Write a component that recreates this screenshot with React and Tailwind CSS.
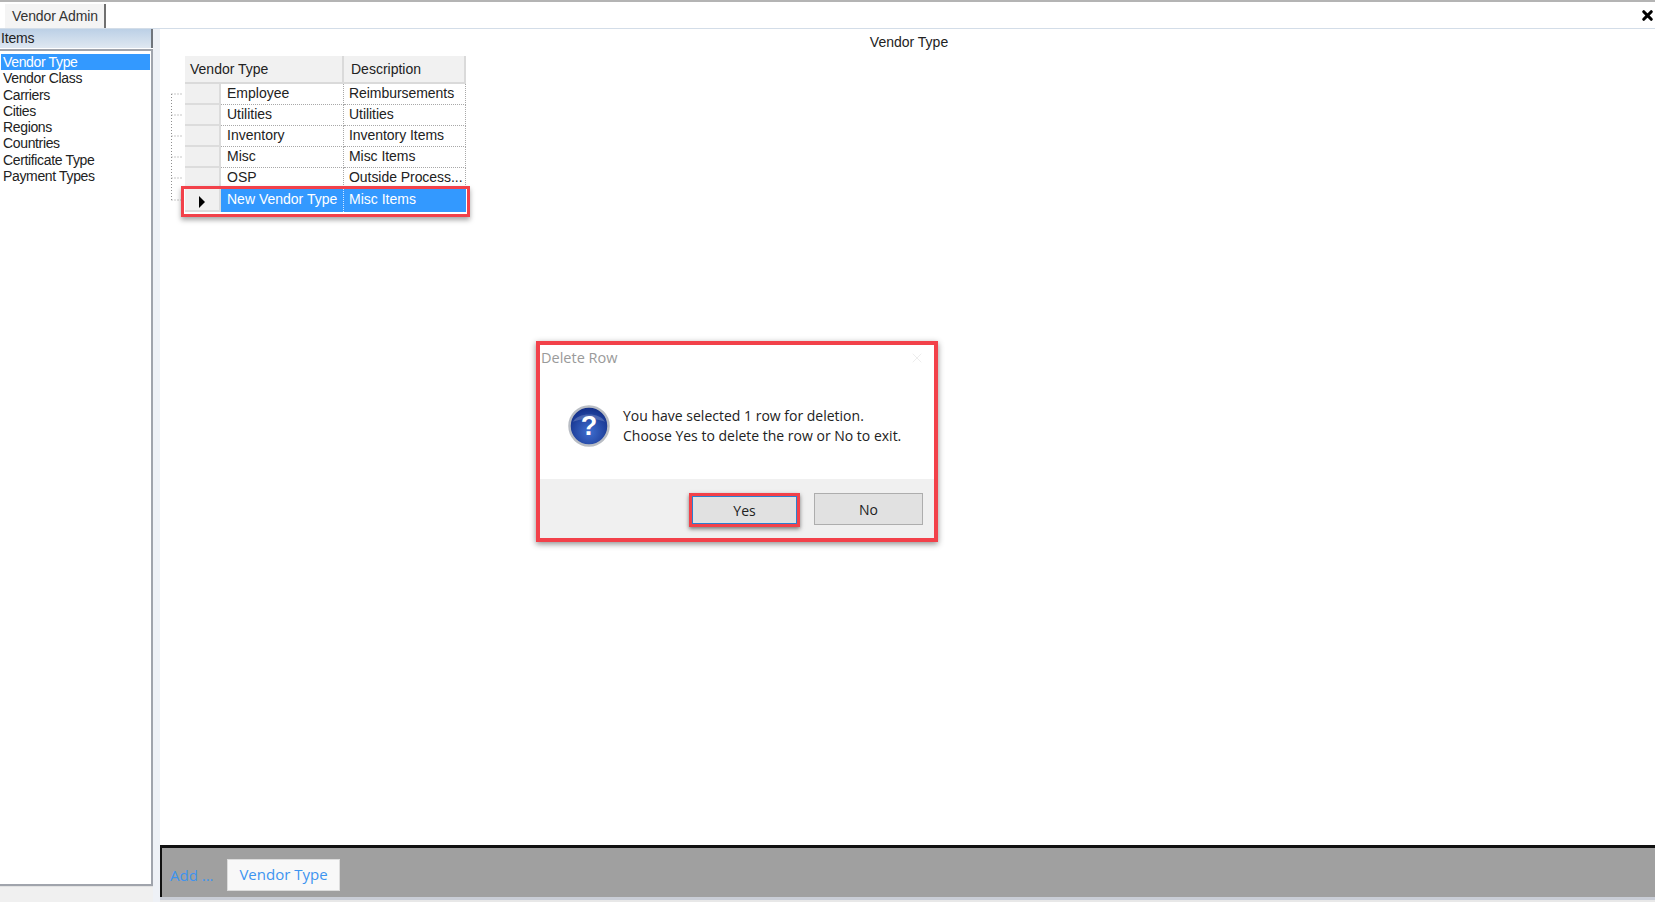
import { X } from "lucide-react";

const items = [
  "Vendor Type",
  "Vendor Class",
  "Carriers",
  "Cities",
  "Regions",
  "Countries",
  "Certificate Type",
  "Payment Types",
];

const rows = [
  { type: "Employee", description: "Reimbursements" },
  { type: "Utilities", description: "Utilities" },
  { type: "Inventory", description: "Inventory Items" },
  { type: "Misc", description: "Misc Items" },
  { type: "OSP", description: "Outside Process..." },
];

const ui = "font-['Liberation_Sans',Arial,sans-serif]";
const dialogFont = "font-['Open_Sans','Noto_Sans',sans-serif]";

const TreeLines = () => (
  <svg width="14" height="118" className="shrink-0 mt-[37px]" fill="none" stroke="#8f8f8f" strokeDasharray="1 2">
    <path d="M2.5 1V107" />
    <path d="M2.5 1H14M2.5 22H14M2.5 43H14M2.5 64H14M2.5 85H14M2.5 107H14" />
  </svg>
);

const RowHeader = ({ children }) => (
  <div className="w-9 shrink-0 self-stretch bg-[#f0f0f0] border-r-2 border-b-2 border-[#dcdcdc] flex items-center justify-center">
    {children}
  </div>
);

const QuestionIcon = () => (
  <svg width="42" height="42" viewBox="0 0 42 42">
    <defs>
      <radialGradient id="ball" cx="50%" cy="65%" r="60%">
        <stop offset="0%" stopColor="#3f6fd0" />
        <stop offset="100%" stopColor="#14308a" />
      </radialGradient>
    </defs>
    <circle cx="21" cy="21" r="19.5" fill="url(#ball)" stroke="#b9bdc4" strokeWidth="2.5" />
    <path d="M5 17C9 7 33 7 37 17C30 13 12 13 5 17Z" fill="#ffffff" opacity="0.2" />
    <text x="21" y="30" textAnchor="middle" fontSize="27" fontWeight="700" fill="#ffffff" fontFamily="'Liberation Sans', sans-serif">?</text>
  </svg>
);

const DeleteDialog = () => (
  <div className={`absolute left-[536px] top-[341px] w-[402px] h-[201px] border-[4px] border-[#f2414a] bg-white flex flex-col shadow-[0_2px_6px_rgba(0,0,0,0.45)] ${dialogFont}`}>
    <div className="flex items-center justify-between pl-[1px] pr-[9px] h-[25px] text-[14.5px] text-[#9a9a9a]">
      <span>Delete Row</span>
      <X size={16} strokeWidth={1} className="text-[#e4e4e4]" />
    </div>
    <div className="flex-1 flex items-start pl-[28px] pt-[35px] gap-[13px]">
      <QuestionIcon />
      <p className="text-[14px] leading-[20px] text-[#222] mt-[1px] whitespace-nowrap">
        You have selected 1 row for deletion.
        <br />
        Choose Yes to delete the row or No to exit.
      </p>
    </div>
    <div className="h-[59px] bg-[#f0f0f0] flex items-start justify-end pr-[11px] pt-[14px] gap-[14px]">
      <div className="border-[3px] border-[#f2414a] shadow-[0_2px_4px_rgba(0,0,0,0.5)]">
        <button className="block w-[105px] h-[28px] bg-[#e1e1e1] border border-[#2a7fd0] text-[14px] text-[#222]">Yes</button>
      </div>
      <button className="block w-[109px] h-[32px] bg-[#e1e1e1] border border-[#adadad] text-[14px] text-[#222]">No</button>
    </div>
  </div>
);

export default function App() {
  return (
    <div className={`relative w-[1655px] h-[902px] overflow-hidden bg-white flex flex-col text-[14px] text-[#1c1c1c] ${ui}`}>
      {/* Tab strip */}
      <div className="h-[29px] shrink-0 border-t-2 border-[#b4b4b4] border-b border-b-[#d3dde8] flex items-end justify-between pl-[5px]">
        <div className="h-[24px] w-[101px] pl-[1px] bg-[#f4f4f4] border-r-2 border-[#707070] flex items-center justify-center text-[#333] tracking-[-0.1px]">
          Vendor Admin
        </div>
        <span className="self-center">
          <X size={15} strokeWidth={5} className="text-black" />
        </span>
      </div>

      <div className="flex-1 min-h-0 flex">
        {/* Items list */}
        <div className="w-[153px] shrink-0 flex flex-col">
          <div className="h-[19px] pb-[1px] shrink-0 pl-[1px] flex items-center bg-gradient-to-b from-[#bcd0e6] to-[#dfe8f1] border-r-2 border-[#70757c] text-[#222] tracking-[-0.2px]">
            Items
          </div>
          <div className="h-[837px] shrink-0 mt-[1px] pt-[3px] pl-[1px] pr-[1px] bg-white border-t-2 border-r-2 border-b-2 border-[#a0a4ac]">
            {items.map((item, i) => (
              <div
                key={item}
                className={`h-[16.25px] leading-[16px] pl-[2px] tracking-[-0.35px] ${i === 0 ? "bg-[#3399ff] text-white" : "text-[#222]"}`}
              >
                {item}
              </div>
            ))}
          </div>
          <div className="flex-1 bg-[#f0f0f0] border-t border-[#e2e2e2]" />
        </div>
        <div className="w-[7px] shrink-0 bg-[#eef1f6]" />

        {/* Main panel */}
        <div className="flex-1 min-w-0 flex flex-col">
          <div className="flex-1 min-h-0 flex flex-col">
            <div className="h-[27px] shrink-0 pt-[3px] text-center text-[#222] pl-[3px]">Vendor Type</div>
            <div className="flex pl-[9px]">
              <TreeLines />
              <div className="relative w-[281px] text-[#222] ml-[2px]">
                <div className="flex h-[28px] bg-[#f1f1f1]">
                  <div className="w-[159px] border-r-2 border-b-2 border-[#dadada] pl-[5px] flex items-center">Vendor Type</div>
                  <div className="flex-1 border-r-2 border-b-2 border-[#dadada] pl-[7px] flex items-center">Description</div>
                </div>
                {rows.map((row) => (
                  <div key={row.type} className="flex h-[21px]">
                    <RowHeader />
                    <div className="w-[123px] border-r border-b border-dotted border-[#a8a8a8] pl-[6px] leading-[19px]">{row.type}</div>
                    <div className="flex-1 border-r border-b border-dotted border-[#a8a8a8] pl-[5px] leading-[19px] tracking-[-0.05px] whitespace-nowrap overflow-hidden">{row.description}</div>
                  </div>
                ))}
                <div className="flex h-[23px]">
                  <RowHeader>
                    <svg width="8" height="12" viewBox="0 0 8 12" className="mt-[4px]">
                      <path d="M1 0L7 6L1 12Z" fill="#000" />
                    </svg>
                  </RowHeader>
                  <div className="w-[123px] bg-[#3399ff] text-white border-r border-dotted border-[#cfe6ff] pl-[6px] leading-[20px]">New Vendor Type</div>
                  <div className="flex-1 bg-[#3399ff] text-white pl-[5px] leading-[20px]">Misc Items</div>
                </div>
                {/* Highlight around the new row */}
                <div className="absolute left-[-4px] top-[130px] w-[289px] h-[31px] border-[3px] border-[#f2414a] shadow-[0_3px_5px_rgba(0,0,0,0.35)]" />
              </div>
            </div>
          </div>

          {/* Add bar */}
          <div className="h-[52px] shrink-0 bg-[#a0a0a0] border-t-[3px] border-l-2 border-[#111] flex items-center pl-[8px]">
            <span className={`text-[#3d94f0] text-[15px] w-[57px] mt-[5px] ${dialogFont}`}>Add ...</span>
            <button className={`w-[113px] h-[32px] mt-[4px] bg-[#f8f8f8] border border-[#dcdcdc] text-[15px] text-[#3d94f0] ${dialogFont}`}>
              Vendor Type
            </button>
          </div>
          <div className="h-[5px] shrink-0 bg-[#c9cdd6] border-b-2 border-[#e8e8e8]" />
        </div>
      </div>

      <DeleteDialog />
    </div>
  );
}
